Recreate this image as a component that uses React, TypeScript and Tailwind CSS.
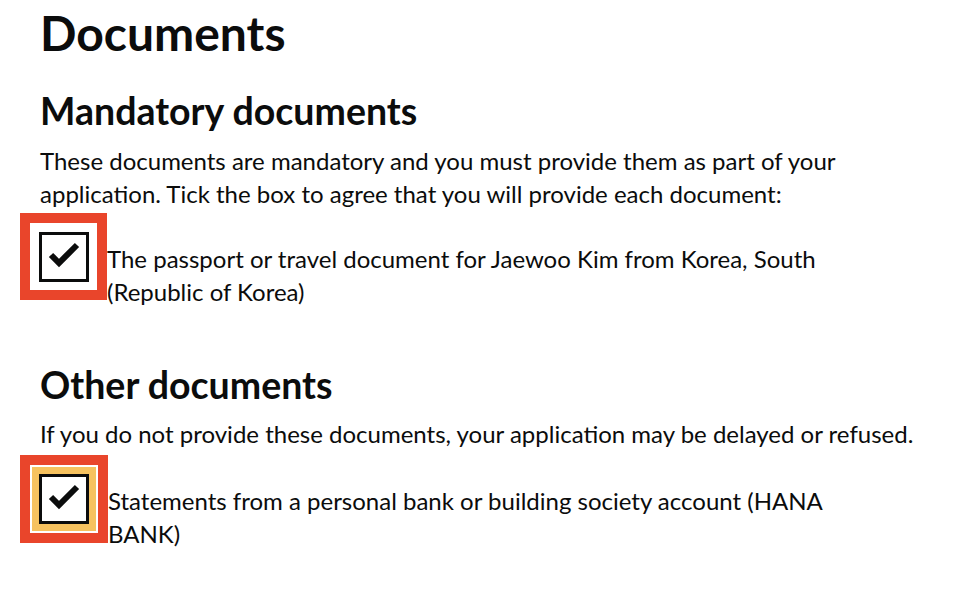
function Tick() {
  return (
    <svg width="44" height="44" viewBox="3 3 44 44" aria-hidden="true">
      <path d="M12 23 L20 31 L38 13" fill="none" stroke="#0b0c0c" strokeWidth="6" strokeLinecap="butt" strokeLinejoin="miter" />
    </svg>
  );
}

function CheckboxItem({ label, focused }: { label: string; focused?: boolean }) {
  const box = (
    <div className="flex h-[50px] w-[50px] items-center justify-center border-[3px] border-[#0b0c0c] bg-white">
      <Tick />
    </div>
  );
  return (
    <div className="-ml-[20px] flex items-start">
      <div className="shrink-0 border-[10px] border-[#e9452b] bg-white">
        {focused ? (
          <div className="p-[2px]">
            <div className="border-[7px] border-[#f6c25f]">{box}</div>
          </div>
        ) : (
          <div className="pb-[8px] pl-[9px] pr-[8px] pt-[9px]">{box}</div>
        )}
      </div>
      <label className="max-w-[790px] pt-[29px] text-[24px] leading-[33px]">{label}</label>
    </div>
  );
}

export default function App() {
  return (
    <div className="min-h-screen bg-white pl-[40px] text-[#0b0c0c] [font-family:Lato,'Noto_Sans',sans-serif]">
      <div className="max-w-[890px] pt-[8px]">
        <h1 className="text-[48px] font-bold leading-[50px]">Documents</h1>

        <h2 className="mt-[33px] text-[37.5px] font-bold leading-[40px]">Mandatory documents</h2>
        <p className="mt-[13px] text-[24px] leading-[33px]">
          These documents are mandatory and you must provide them as part of your application. Tick the box to agree
          that you will provide each document:
        </p>
        <div className="mt-[3px]">
          <CheckboxItem label="The passport or travel document for Jaewoo Kim from Korea, South (Republic of Korea)" />
        </div>

        <h2 className="mt-[57px] text-[37.5px] font-bold leading-[40px]">Other documents</h2>
        <p className="mt-[12px] text-[24px] leading-[33px]">
          If you do not provide these documents, your application may be delayed or refused.
        </p>
        <div className="mt-[5px]">
          <CheckboxItem
            focused
            label="Statements from a personal bank or building society account (HANA BANK)"
          />
        </div>
      </div>
    </div>
  );
}
